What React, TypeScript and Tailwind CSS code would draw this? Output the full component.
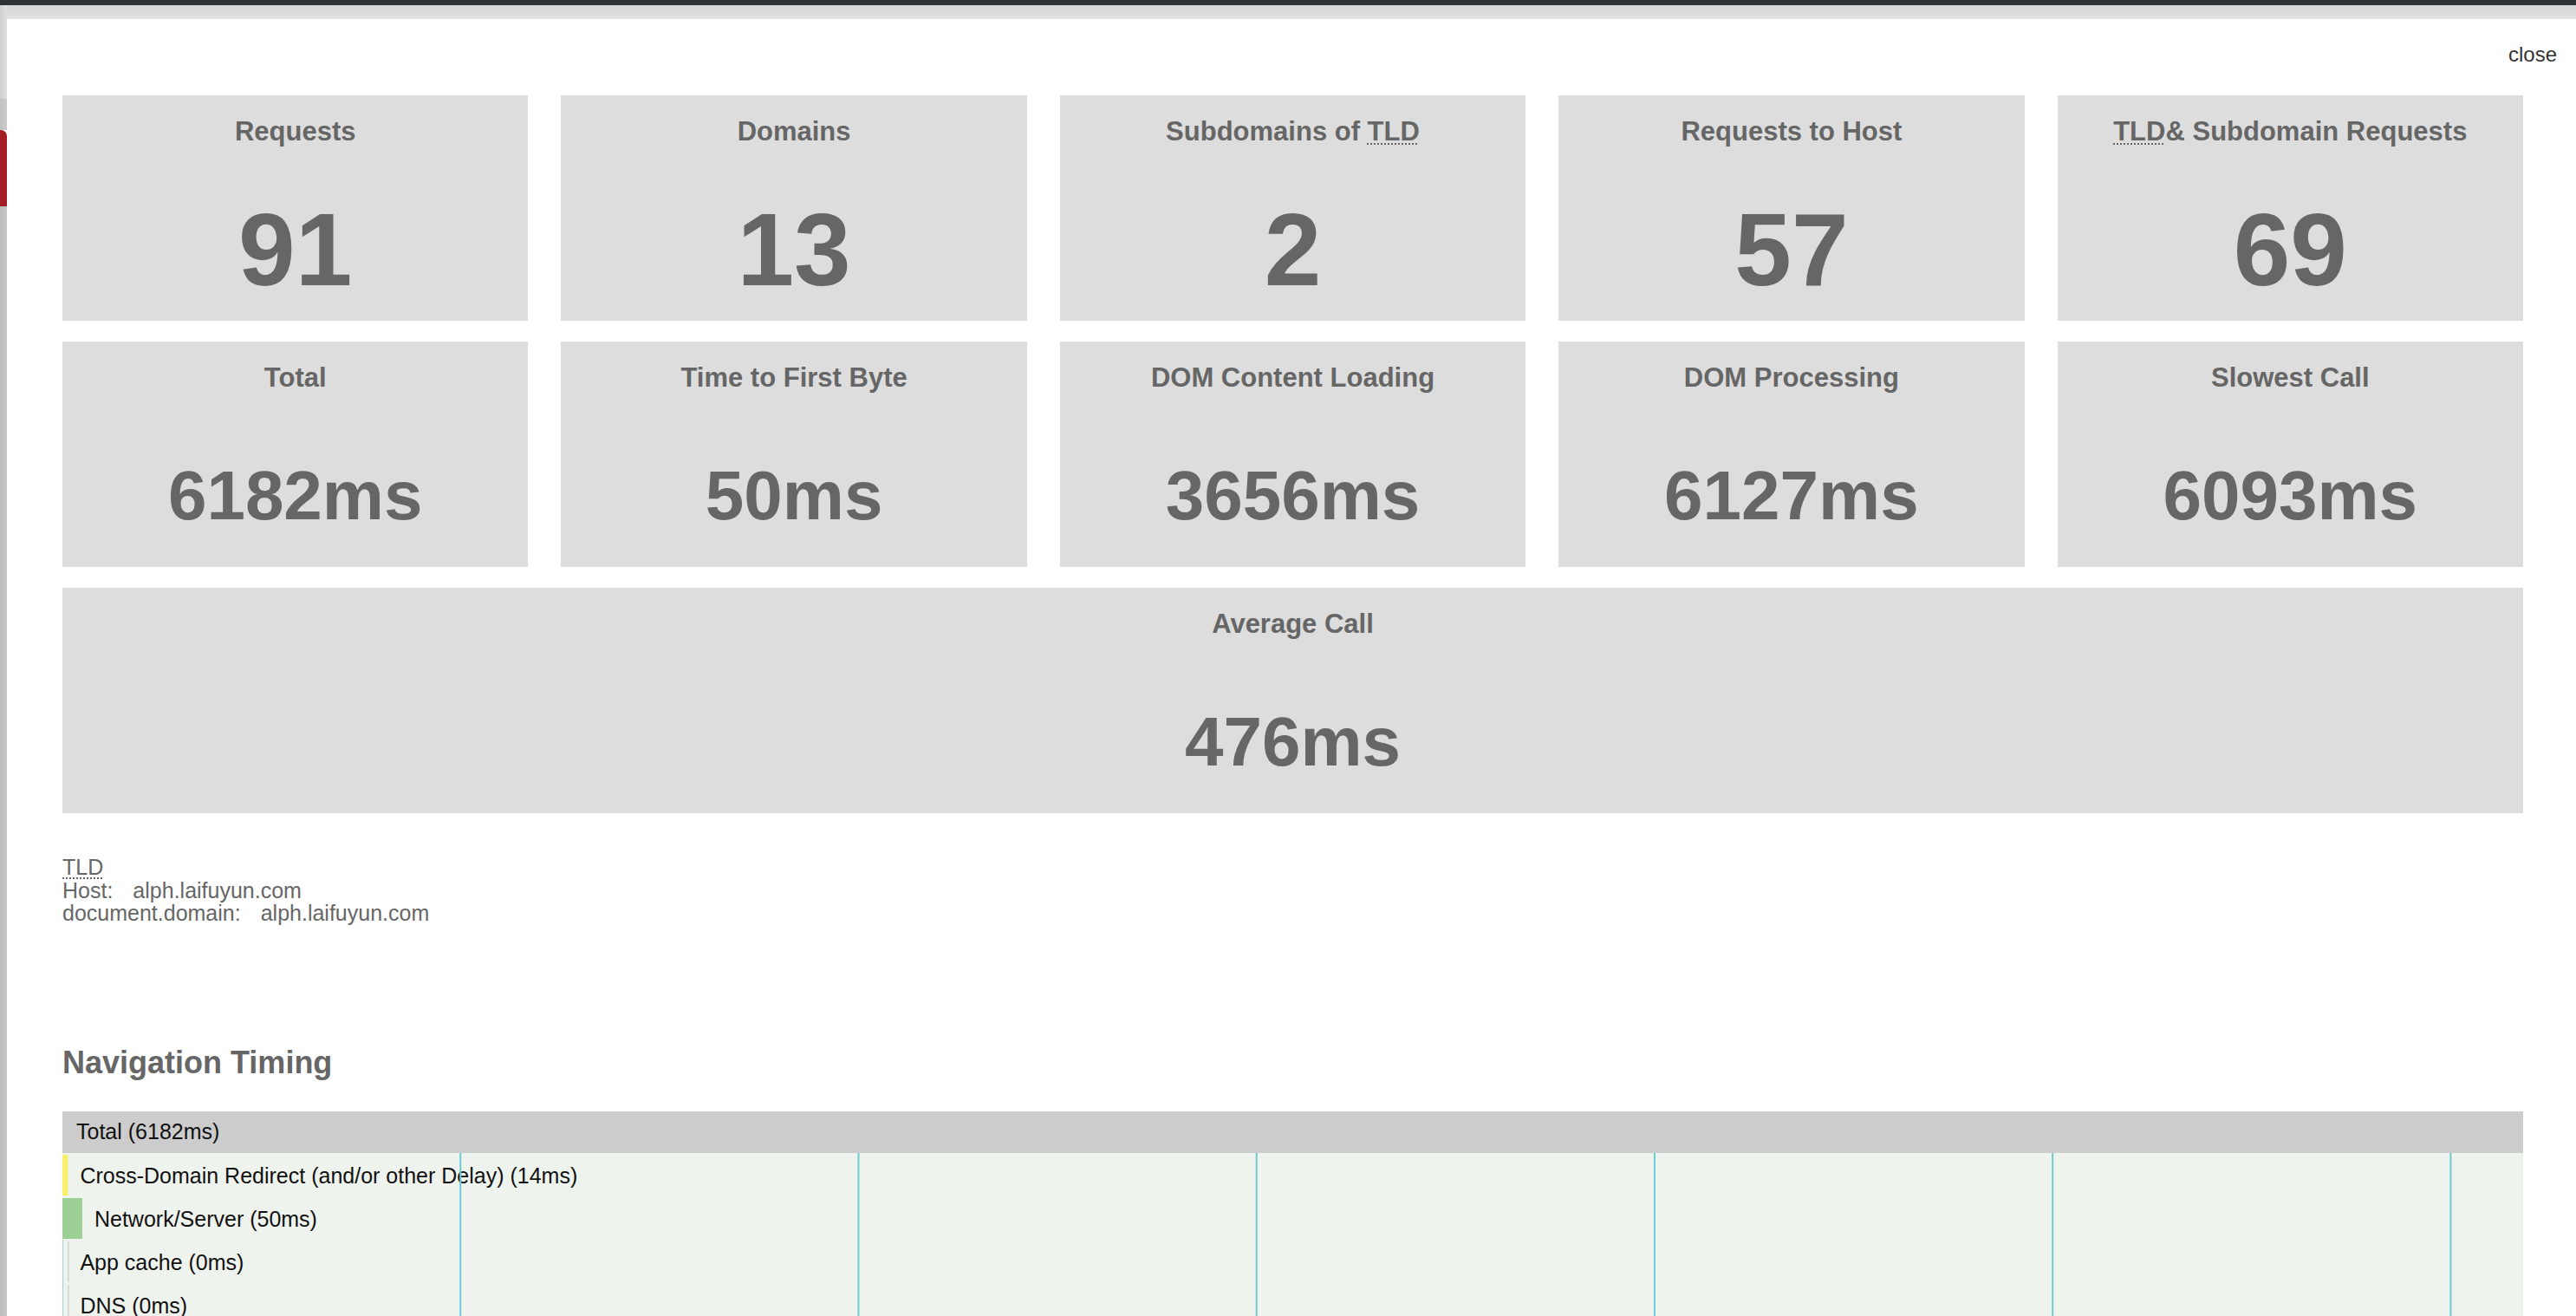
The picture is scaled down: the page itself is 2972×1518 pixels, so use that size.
import React from "react";

const W = 2839;
const TOTAL = 6182;
const S = W / TOTAL;

type Row = { label: string; start: number; dur: number; color: string };

const rows: Row[] = [
  { label: "Cross-Domain Redirect (and/or other Delay) (14ms)", start: 0, dur: 14, color: "#f8ef6c" },
  { label: "Network/Server (50ms)", start: 0, dur: 50, color: "#9dd095" },
  { label: "App cache (0ms)", start: 14, dur: 0, color: "#c4c4c4" },
  { label: "DNS (0ms)", start: 14, dur: 0, color: "#c4c4c4" },
  { label: "TCP (0ms)", start: 14, dur: 0, color: "#c4c4c4" },
  { label: "Timer to First Byte (36ms)", start: 14, dur: 36, color: "#9dd095" },
];

function Abbr({ children }: { children: React.ReactNode }) {
  return (
    <abbr title="Top Level Domain" className="underline decoration-dotted decoration-[2px] underline-offset-[3px]">
      {children}
    </abbr>
  );
}

function Stat({ title, value, big, className }: { title: React.ReactNode; value: string; big?: boolean; className?: string }) {
  return (
    <div className={"h-[260px] bg-[#dddddd] flex flex-col items-center pt-[24px] text-[#666666] " + (className ?? "")}>
      <div className="text-[31px] leading-[36px] font-bold whitespace-nowrap">{title}</div>
      <div className="mt-[58px] h-[120px] flex items-center justify-center">
        {big ? (
          <span className="text-[118px] leading-none font-bold">{value}</span>
        ) : (
          <span className="text-[80px] leading-none font-bold">{value}</span>
        )}
      </div>
    </div>
  );
}

function Waterfall() {
  const rowH = 50;
  const height = rows.length * rowH + 20;
  const grid = [1, 2, 3, 4, 5, 6].map((k) => k * 1000 * S);
  return (
    <svg width={W} height={height} className="block">
      <rect x={0} y={0} width={W} height={height} fill="#eff3ee" />
      <line x1={0.5} y1={100} x2={0.5} y2={height} stroke="#9fd3d6" strokeWidth={1} />
      {rows.map((r, i) => {
        const top = i * rowH;
        const x = r.start * S;
        const w = Math.max(r.dur * S, 1);
        return <rect key={"b" + i} x={x} y={top + 2} width={w} height={47} fill={r.color} />;
      })}
      {rows.map((r, i) => {
        const top = i * rowH;
        const tx = r.start * S + r.dur * S + 14;
        return (
          <text
            key={"t" + i}
            x={tx}
            y={top + 35}
            fontSize={25}
            fill="#111111"
            fontFamily="'Liberation Sans', Arial, sans-serif"
          >
            {r.label}
          </text>
        );
      })}
      {grid.map((gx, i) => (
        <line key={"g" + i} x1={gx} y1={0} x2={gx} y2={height} stroke="#6ccbcf" strokeWidth={2} />
      ))}
    </svg>
  );
}

export default function App() {
  return (
    <div className="w-[2972px] h-[1518px] overflow-hidden flex flex-col font-['Liberation_Sans',Arial,sans-serif] bg-white">
      <div className="h-[6px] shrink-0 bg-[#2e3134]" />
      <div className="flex flex-1 min-h-0">
        <div className="w-[8px] shrink-0 flex flex-col">
          <div className="h-[108px] shrink-0 bg-gradient-to-r from-[#cfcfcf] to-[#e0e0e0]" />
          <div className="h-[36px] shrink-0 bg-gradient-to-r from-[#c2c2c2] to-[#cacaca]" />
          <div className="h-[88px] shrink-0 bg-[#a31e23] rounded-tr-[7px]" />
          <div className="flex-1 bg-gradient-to-r from-[#bcbcbc] to-[#c6c6c6]" />
        </div>
        <div className="flex-1 flex flex-col min-w-0 min-h-0">
          <div className="h-[16px] shrink-0 bg-gradient-to-b from-[#d4d4d4] to-[#e2e2e2]" />
          <div className="relative flex-1 min-h-0 bg-white pl-[64px] pr-[61px] pt-[88px]">
            <button className="absolute top-[27px] right-[22px] text-[24px] leading-[28px] text-[#333333] cursor-pointer">
              close
            </button>

            <div className="grid grid-cols-5 gap-x-[38px] gap-y-[24px]">
              <Stat title="Requests" value="91" big />
              <Stat title="Domains" value="13" big />
              <Stat title={<span>Subdomains of <Abbr>TLD</Abbr></span>} value="2" big />
              <Stat title="Requests to Host" value="57" big />
              <Stat title={<span><Abbr>TLD</Abbr>&amp; Subdomain Requests</span>} value="69" big />
              <Stat title="Total" value="6182ms" />
              <Stat title="Time to First Byte" value="50ms" />
              <Stat title="DOM Content Loading" value="3656ms" />
              <Stat title="DOM Processing" value="6127ms" />
              <Stat title="Slowest Call" value="6093ms" />
              <Stat title="Average Call" value="476ms" className="col-span-5 h-[258px]" />
            </div>

            <div className="mt-[49px] text-[25px] leading-[26.5px] text-[#666666]">
              <div>
                <Abbr>TLD</Abbr>
              </div>
              <div>
                <span className="mr-[23px]">Host:</span>alph.laifuyun.com
              </div>
              <div>
                <span className="mr-[23px]">document.domain:</span>alph.laifuyun.com
              </div>
            </div>

            <h2 className="mt-[138px] text-[36px] leading-[42px] font-bold text-[#666666]">Navigation Timing</h2>

            <div className="mt-[35px]">
              <div className="h-[48px] bg-[#cccccc] flex items-center pl-[16px] text-[25px] text-[#111111]">
                Total (6182ms)
              </div>
              <Waterfall />
            </div>
          </div>
        </div>
      </div>
    </div>
  );
}
